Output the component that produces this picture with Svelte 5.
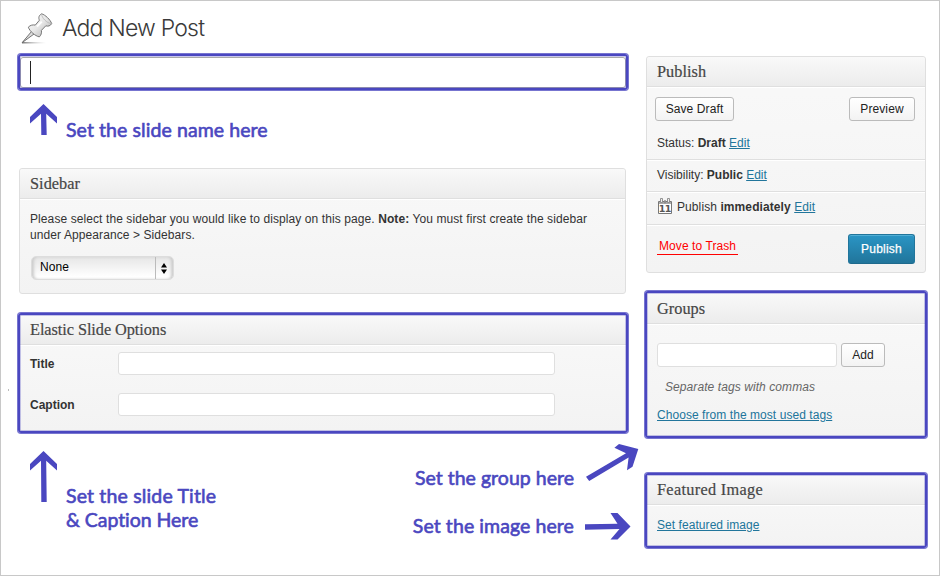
<script>
  const rows = [
    { label: 'Status:', value: 'Draft', icon: false },
    { label: 'Visibility:', value: 'Public', icon: false },
    { label: 'Publish', value: 'immediately', icon: true },
  ];
  const fields = ['Title', 'Caption'];
</script>

<div class="page">
  <i class="speck"></i>
  <main>
    <header>
      <svg class="pin" width="32" height="32" viewBox="0 0 32 32">
        <defs>
          <linearGradient id="metal" x1="0" y1="0" x2="1" y2="1">
            <stop offset="0" stop-color="#fff" />
            <stop offset=".5" stop-color="#e6e6e6" />
            <stop offset="1" stop-color="#aaa" />
          </linearGradient>
          <linearGradient id="shade" x1="0" x2="1">
            <stop offset="0" stop-color="#555" />
            <stop offset="1" stop-color="#bbb" stop-opacity="0" />
          </linearGradient>
        </defs>
        <rect x="1" y="29.2" width="24" height="1.2" fill="url(#shade)" />
        <path d="M10.5 18.5L1.2 29.6L13.3 20.8Z" fill="#ddd" stroke="#666" stroke-width=".9" stroke-linejoin="round" />
        <path d="M7.3 14.2C9.4 12 12 11.6 14.3 12.1L18.4 7.2C17.3 4.8 17.8 2.4 20.6 .8C24.2 1.8 29.3 6.6 30.7 10.6C29.3 13 27 13.6 24.8 12.8L20.4 17.4C20.8 19.7 20.2 22.3 18.3 23.9C14 22.8 9 18.6 7.3 14.2Z" fill="url(#metal)" stroke="#777" stroke-width="1" stroke-linejoin="round" />
        <path d="M20.6 1.2C20.5 4.5 26 10.5 30.4 10.6" fill="none" stroke="#b5b5b5" stroke-width=".8" />
        <path d="M16 13.5L20.8 8.6" stroke="#fff" stroke-width="2" />
      </svg>
      <h1>Add New Post</h1>
    </header>

    <div class="name-field marked"><span class="caret"></span></div>

    <div class="note first">
      <svg width="27" height="32" viewBox="0 0 27 32"><path d="M13.5 0L27 13V19.5L16.2 9.8L16.7 31H11.3L11 9.8L0 19.5V13Z" /></svg>
      <p>Set the slide name here</p>
    </div>

    <section class="box sidebar">
      <h2>Sidebar</h2>
      <div class="inside">
        <p><span class="l1">Please select the sidebar you would like to display on this page. <b>Note:</b> You must first create the sidebar</span><br />under Appearance &gt; Sidebars.</p>
        <div class="select">
          <span>None</span>
          <i><svg width="6" height="11" viewBox="0 0 6 11"><path d="M3 0L6 4.6H0ZM0 6.4H6L3 11Z" /></svg></i>
        </div>
      </div>
    </section>

    <section class="box marked options">
      <h2>Elastic Slide Options</h2>
      {#each fields as field}
        <div class="field"><b>{field}</b><span class="input"></span></div>
      {/each}
    </section>

    <div class="notes">
      <div class="note">
        <svg width="27" height="52" viewBox="0 0 27 52"><path d="M13.5 0L27 13V19.5L16.2 9.8L16.7 51H11.3L11 9.8L0 19.5V13Z" /></svg>
        <p class="two"><span>Set the slide Title</span><br />&amp; Caption Here</p>
      </div>
      <div class="right-notes">
        <div class="note group">
          <p>Set the group here</p>
          <svg width="53" height="37" viewBox="0 0 53 37"><path d="M0 32.8L40 9.2L28.4 3.8L33 0L52.3 5L46.5 22.8L41 26.3L42.6 13.5L3.2 37Z" /></svg>
        </div>
        <div class="note image">
          <p>Set the image here</p>
          <svg width="46" height="27" viewBox="0 0 46 27"><path d="M0 11.3L32.5 10.8L25.5 0H32.5L45.5 13.4L32.5 26.5H25.5L34.5 16L0 16.7Z" /></svg>
        </div>
      </div>
    </div>
  </main>

  <aside>
    <section class="box publish">
      <h2>Publish</h2>
      <div class="actions">
        <button style:width="79px">Save Draft</button>
        <button style:width="66px">Preview</button>
      </div>
      {#each rows as row}
        <div class="row">
          {#if row.icon}
            <svg width="14" height="17" viewBox="0 0 14 17">
              <path d="M.5 3.5H13.5V15.5H.5Z" fill="#fff" stroke="#777" />
              <path d="M1 4H13V6H1Z" fill="#aaa" />
              <path d="M2.5 .5H4.5V4.5H2.5ZM9.5 .5H11.5V4.5H9.5ZM6.5 2.5H7.5V5H6.5Z" fill="#eee" stroke="#888" stroke-width=".9" />
              <text x="6.8" y="14" text-anchor="middle">11</text>
            </svg>
          {/if}
          <span>{row.label} <b>{row.value}</b> <a href="#edit">Edit</a></span>
        </div>
      {/each}
      <div class="final">
        <a class="trash" href="#trash">Move to Trash</a>
        <button class="primary">Publish</button>
      </div>
    </section>

    <section class="box marked groups">
      <h2>Groups</h2>
      <div class="add"><span class="input"></span><button>Add</button></div>
      <em>Separate tags with commas</em>
      <a href="#tags">Choose from the most used tags</a>
    </section>

    <section class="box marked featured">
      <h2>Featured Image</h2>
      <a href="#image">Set featured image</a>
    </section>
  </aside>
</div>

<style>
  :global(body) { background: #fff; }
  * { box-sizing: border-box; }
  .page {
    position: relative; display: flex; width: 940px; height: 576px; overflow: hidden;
    border: 1px solid #c8c8c8; background: #fff; color: #333;
    font: 12px/16px "Liberation Sans", Arial, sans-serif;
  }
  p, h1, h2 { margin: 0; font-weight: normal; }
  a { color: #21759b; text-decoration: underline; }
  .speck { position: absolute; left: 7px; top: 388px; width: 1px; height: 2px; background: #bbb; }
  main { width: 608px; margin-left: 18px; display: flex; flex-direction: column; }
  aside { width: 280px; margin-left: 19px; padding-top: 55px; display: flex; flex-direction: column; }
  header { display: flex; height: 55px; padding: 12px 0 0 2px; }
  h1 { margin: -1px 0 0 9px; font: 300 23px/32px Inter, "Liberation Sans", sans-serif; color: #3a3a3a; letter-spacing: -.8px; }
  .marked { position: relative; }
  .marked::after {
    content: ""; position: absolute; inset: -2px; border: 2px solid #4a47c0; border-radius: 3px;
    box-shadow: 0 0 0 1px rgba(74, 71, 192, .75), inset 0 0 0 1px rgba(74, 71, 192, .3);
  }
  .name-field { width: 606px; height: 31px; margin: 1px 0 2px 1px; padding: 3px 0 0 9px; border: 1px solid #aaa; border-radius: 3px; }
  .name-field.marked::after { inset: -4px -3px -3px; }
  .name-field .caret { display: block; width: 1px; height: 23px; background: #222; }
  .note {
    display: flex; color: #4a47c0; font: 700 19.5px/24px Lato, "Noto Sans", sans-serif; white-space: nowrap;
    font-variant-ligatures: none; letter-spacing: .08px; -webkit-text-stroke: .6px #4a47c0;
  }
  .note svg { flex: none; fill: #4a47c0; stroke: none; }
  .first { height: 78px; padding: 14px 0 0 11px; }
  .first p { margin: 14px 0 0 9px; }
  .box { border: 1px solid #dfdfdf; border-radius: 3px; background: linear-gradient(#f9f9f9, #f3f3f3); }
  h2 {
    height: 30px; padding-left: 10px; border-bottom: 1px solid #dfdfdf; box-shadow: 0 1px 0 #fff;
    background: linear-gradient(#f9f9f9, #ececec); border-radius: 3px 3px 0 0;
    font: 16.3px/29px "Liberation Serif", Georgia, serif; color: #464646; letter-spacing: .04px; -webkit-text-stroke: .2px #464646;
  }
  .sidebar { width: 607px; height: 126px; }
  .inside { padding: 12px 10px; letter-spacing: .09px; }
  .l1 { white-space: nowrap; }
  .select {
    display: flex; justify-content: space-between; width: 143px; height: 24px; margin: 13px 0 0 1px; padding-left: 8px;
    border: 1px solid #ddd; border-radius: 5px; background: linear-gradient(#e6e6e6, #fff 90%);
    box-shadow: inset 3px 0 3px -1px #ccc, inset -3px 0 3px -1px #ccc; color: #000; line-height: 21px;
  }
  .select i { width: 18px; border-left: 1px solid #bbb; padding: 6px 0 0 5px; display: flex; }
  .options { width: 608px; height: 118px; margin-top: 20px; }
  .options h2 { letter-spacing: -.06px; }
  .field { display: flex; height: 41px; align-items: flex-start; padding: 7px 0 0 10px; }
  .field b { width: 88px; line-height: 25px; }
  .input { display: block; width: 437px; height: 23px; background: #fff; border: 1px solid #dfdfdf; border-radius: 3px; }
  .notes { display: flex; justify-content: space-between; padding: 19px 0 0 11px; }
  .two { margin: 33px 0 0 9px; letter-spacing: -.05px; }
  .two span { letter-spacing: .16px; }
  .right-notes { display: flex; flex-direction: column; align-items: flex-end; margin-top: -8px; }
  .group { height: 70px; margin-right: -12px; }
  .group p { margin: 23px 12px 0 0; letter-spacing: .02px; }
  .group svg { margin-top: 1px; }
  .image { margin-right: -4px; }
  .image p { margin: 1px 11px 0 0; }
  .publish { height: 217px; }
  button {
    height: 24px; padding: 0; border: 1px solid #bbb; border-radius: 3px; background: linear-gradient(#fff, #f3f3f3);
    font: 12px/22px "Liberation Sans", Arial, sans-serif; color: #222; letter-spacing: .1px;
  }
  .actions { display: flex; justify-content: space-between; height: 40px; padding: 10px 10px 0 8px; }
  .row { display: flex; height: 32px; padding: 7px 10px 0; border-bottom: 1px solid #dfdfdf; box-shadow: 0 1px 0 #fff; white-space: nowrap; }
  .actions + .row { height: 33px; padding-top: 8px; }
  .row:has(svg) { height: 33px; letter-spacing: .09px; }
  .row svg { margin: -1px 5px 0 1px; }
  .row text { font: bold 9.5px "DejaVu Sans", sans-serif; fill: #555; letter-spacing: -.6px; }
  .final { display: flex; justify-content: space-between; padding: 9px 10px 0; }
  .trash { height: 17px; margin-top: 4px; padding: 0 2px; color: #f00; text-decoration: none; border-bottom: 1px solid #f00; letter-spacing: .08px; }
  .primary { width: 67px; height: 30px; border-color: #21759b #21759b #1e6a8d; background: linear-gradient(#2a95c5, #21759b); color: #fff; line-height: 28px; box-shadow: inset 0 1px 0 rgba(120, 200, 230, .5); letter-spacing: .2px; -webkit-text-stroke: .25px #fff; }
  .groups, .featured { display: flex; flex-direction: column; }
  .groups { height: 145px; margin-top: 19px; }
  .groups h2, .featured h2 { height: 31px; flex: none; line-height: 31px; }
  .featured h2 { letter-spacing: .3px; }
  .add { display: flex; gap: 4px; margin: 19px 0 0 10px; }
  .add .input { width: 180px; height: 24px; }
  .add button { width: 44px; }
  em { margin: 12px 0 0 18px; color: #666; letter-spacing: .08px; }
  .groups a, .featured a { margin: 12px 0 0 10px; letter-spacing: .06px; }
  .featured { height: 74px; margin-top: 36px; }
  .featured.marked::after { top: -1px; }
</style>
